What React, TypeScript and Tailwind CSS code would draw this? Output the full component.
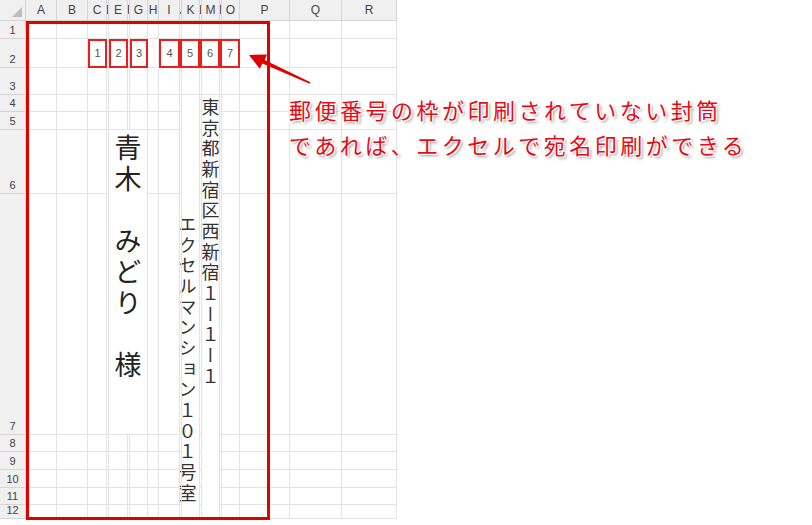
import React from "react";

const COLS = ["A", "B", "C", "D", "E", "F", "G", "H", "I", "J", "K", "L", "M", "N", "O", "P", "Q", "R"];
const NARROW = new Set(["D", "F", "J", "L", "N"]);

const headerCls =
  "bg-[#f0f0f0] border-r border-b border-[#d5d5d5] text-[12px] text-[#444] flex items-center justify-center overflow-hidden font-['Liberation_Sans',sans-serif]";
const narrowHeaderCls =
  "bg-[#f0f0f0] border-r border-b border-[#d5d5d5] text-[12px] text-[#444] flex items-center justify-start overflow-hidden font-['Liberation_Sans',sans-serif]";
const rowHeaderCls =
  "bg-[#f0f0f0] border-r border-b border-[#d5d5d5] text-[11px] leading-[13px] text-[#444] flex items-end justify-center pb-[1px] font-['Liberation_Sans',sans-serif]";
const cellCls = "border-r border-b border-[#e3e3e3]";
const boxCls =
  "border-2 border-[#ee1d1d] flex items-center justify-center text-[11px] text-[#555] font-['Liberation_Sans',sans-serif]";
const boxWideCls =
  "col-span-2 border-2 border-[#ee1d1d] flex items-center justify-center text-[11px] text-[#555] font-['Liberation_Sans',sans-serif]";
const vText =
  "[writing-mode:vertical-rl] [text-orientation:upright] whitespace-nowrap font-['Noto_Sans_CJK_JP',sans-serif]";

function covered(r: number, c: string) {
  if (r === 2 && (c === "K" || c === "M" || c === "O")) return true;
  if (r >= 5 && (c === "K" || c === "M")) return true;
  if (r === 6 && (c === "F" || c === "G")) return true;
  if (r === 7 && (c === "E" || c === "F" || c === "G")) return true;
  return false;
}

const boxNums: Record<string, string> = { C: "1", E: "2", G: "3", I: "4", J: "5", L: "6", N: "7" };

export default function App() {
  const cells: React.ReactNode[] = [];
  cells.push(
    <div key="corner" className="bg-[#f0f0f0] border-r border-b border-[#d5d5d5] flex items-end justify-end">
      <svg width="12" height="12" viewBox="0 0 12 12" className="mb-[2px] mr-[2px]">
        <polygon points="11,1 11,11 1,11" fill="#bdbdbd" />
      </svg>
    </div>
  );
  COLS.forEach((c) =>
    cells.push(
      NARROW.has(c) ? (
        <div key={"h" + c} className={narrowHeaderCls}>
          <span className="-ml-px">{c}</span>
        </div>
      ) : (
        <div key={"h" + c} className={headerCls}>
          {c}
        </div>
      )
    )
  );
  for (let r = 1; r <= 12; r++) {
    cells.push(
      <div key={"r" + r} className={rowHeaderCls}>
        {r}
      </div>
    );
    for (const c of COLS) {
      if (covered(r, c)) continue;
      const k = `${c}${r}`;
      if (r === 2 && boxNums[c]) {
        const wide = c === "J" || c === "L" || c === "N";
        cells.push(
          <div key={k} className={wide ? boxWideCls : boxCls}>
            {boxNums[c]}
          </div>
        );
        continue;
      }
      if (r === 4 && c === "M") {
        cells.push(
          <div key={k} className="row-span-9 border-r border-b border-[#e3e3e3] flex justify-center pt-[3px]">
            <div className={vText + " text-[18px] leading-[18px] tracking-[2.7px] text-[#333]"}>
              東京都新宿区西新宿１ー１ー１
            </div>
          </div>
        );
        continue;
      }
      if (r === 4 && c === "K") {
        cells.push(
          <div key={k} className="row-span-9 border-r border-b border-[#e3e3e3] flex justify-center pt-[120px] pr-[6px]">
            <div className={vText + " text-[18px] leading-[18px] tracking-[2.7px] text-[#333]"}>
              エクセルマンション１０１号室
            </div>
          </div>
        );
        continue;
      }
      if (r === 6 && c === "E") {
        cells.push(
          <div key={k} className="col-span-3 row-span-2 border-r border-b border-[#e3e3e3] flex justify-center pt-[4px]">
            <div className={vText + " text-[27px] leading-[27px] tracking-[4px] text-[#222]"}>
              青木　みどり　様
            </div>
          </div>
        );
        continue;
      }
      cells.push(<div key={k} className={cellCls} />);
    }
  }

  return (
    <div className="relative w-[812px] h-[525px] bg-white overflow-hidden">
      <div className="grid w-[397px] grid-cols-[26px_31px_31px_19px_2px_19px_2px_18px_11px_21px_2px_18px_2px_18px_2px_18px_50px_52px_55px] grid-rows-[21px_18px_29px_27px_17px_18px_64px_241px_17px_18px_18px_17px_14px]">
        {cells}
      </div>

      {/* red envelope frame */}
      <div className="absolute left-[26px] top-[21px] w-[244px] h-[499px] border-[3px] border-[#e00000]" />

      {/* arrow */}
      <svg className="absolute left-0 top-0 pointer-events-none" width="812" height="525" viewBox="0 0 812 525">
        <polygon
          points="249,55 267,54.5 264.6,59.9 310.4,82.2 309.6,83.8 262.4,63.6 259.8,68.8"
          fill="#e00000"
        />
      </svg>

      {/* callout */}
      <div className="absolute left-[289px] top-[92px] text-[22px] leading-[35px] tracking-[3.5px] whitespace-nowrap text-[#e60b17] font-['Noto_Sans_CJK_JP',sans-serif] [text-shadow:-1px_-1px_0_#fff,1px_-1px_0_#fff,-1px_1px_0_#fff,1px_1px_0_#fff,2px_2px_3px_rgba(0,0,0,0.45)]">
        <div>郵便番号の枠が印刷されていない封筒</div>
        <div>であれば、エクセルで宛名印刷ができる</div>
      </div>
    </div>
  );
}
